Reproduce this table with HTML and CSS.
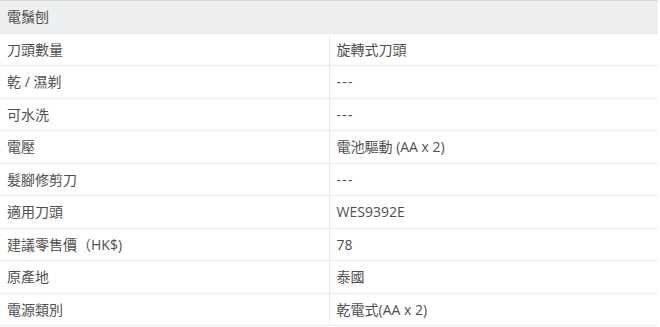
FILE: index.html
```
<!DOCTYPE html>
<html lang="zh-Hant">
<head>
<meta charset="utf-8">
<link rel="stylesheet" href="styles.css">
</head>
<body>
<table class="spec">
  <thead>
    <tr><th colspan="2">電鬚刨</th></tr>
  </thead>
  <tbody>
    <tr><td class="label">刀頭數量</td><td>旋轉式刀頭</td></tr>
    <tr><td class="label">乾 / 濕剃</td><td><span class="dash">---</span></td></tr>
    <tr><td class="label">可水洗</td><td><span class="dash">---</span></td></tr>
    <tr><td class="label">電壓</td><td>電池驅動 (AA x 2)</td></tr>
    <tr><td class="label">髮腳修剪刀</td><td><span class="dash">---</span></td></tr>
    <tr><td class="label">適用刀頭</td><td>WES9392E</td></tr>
    <tr><td class="label">建議零售價（HK$)</td><td>78</td></tr>
    <tr><td class="label">原產地</td><td>泰國</td></tr>
    <tr><td class="label">電源類別</td><td>乾電式(AA x 2)</td></tr>
  </tbody>
</table>
</body>
</html>
```
FILE: styles.css
```
html, body {
  margin: 0;
  padding: 0;
  background: #ffffff;
}
body {
  font-family: "Open Sans", "Noto Sans CJK TC", sans-serif;
  font-size: 14px;
  color: #4f4f4f;
}
.spec {
  width: 658px;
  border-collapse: collapse;
  table-layout: fixed;
  border-top: 1px solid #d9dadc;
}
.spec th {
  background: #eeeff1;
  text-align: left;
  font-weight: normal;
  padding: 5.25px 7px;
  line-height: 21px;
  border-bottom: 1px solid #e4e9ee;
}
.spec td {
  padding: 5.25px 7px;
  line-height: 21px;
  border-bottom: 1px solid #e8ecf0;
  white-space: nowrap;
}
.spec td.label {
  width: 314px;
  border-right: 1px solid #e8ecf0;
}
.dash {
  letter-spacing: 1.2px;
}
```
